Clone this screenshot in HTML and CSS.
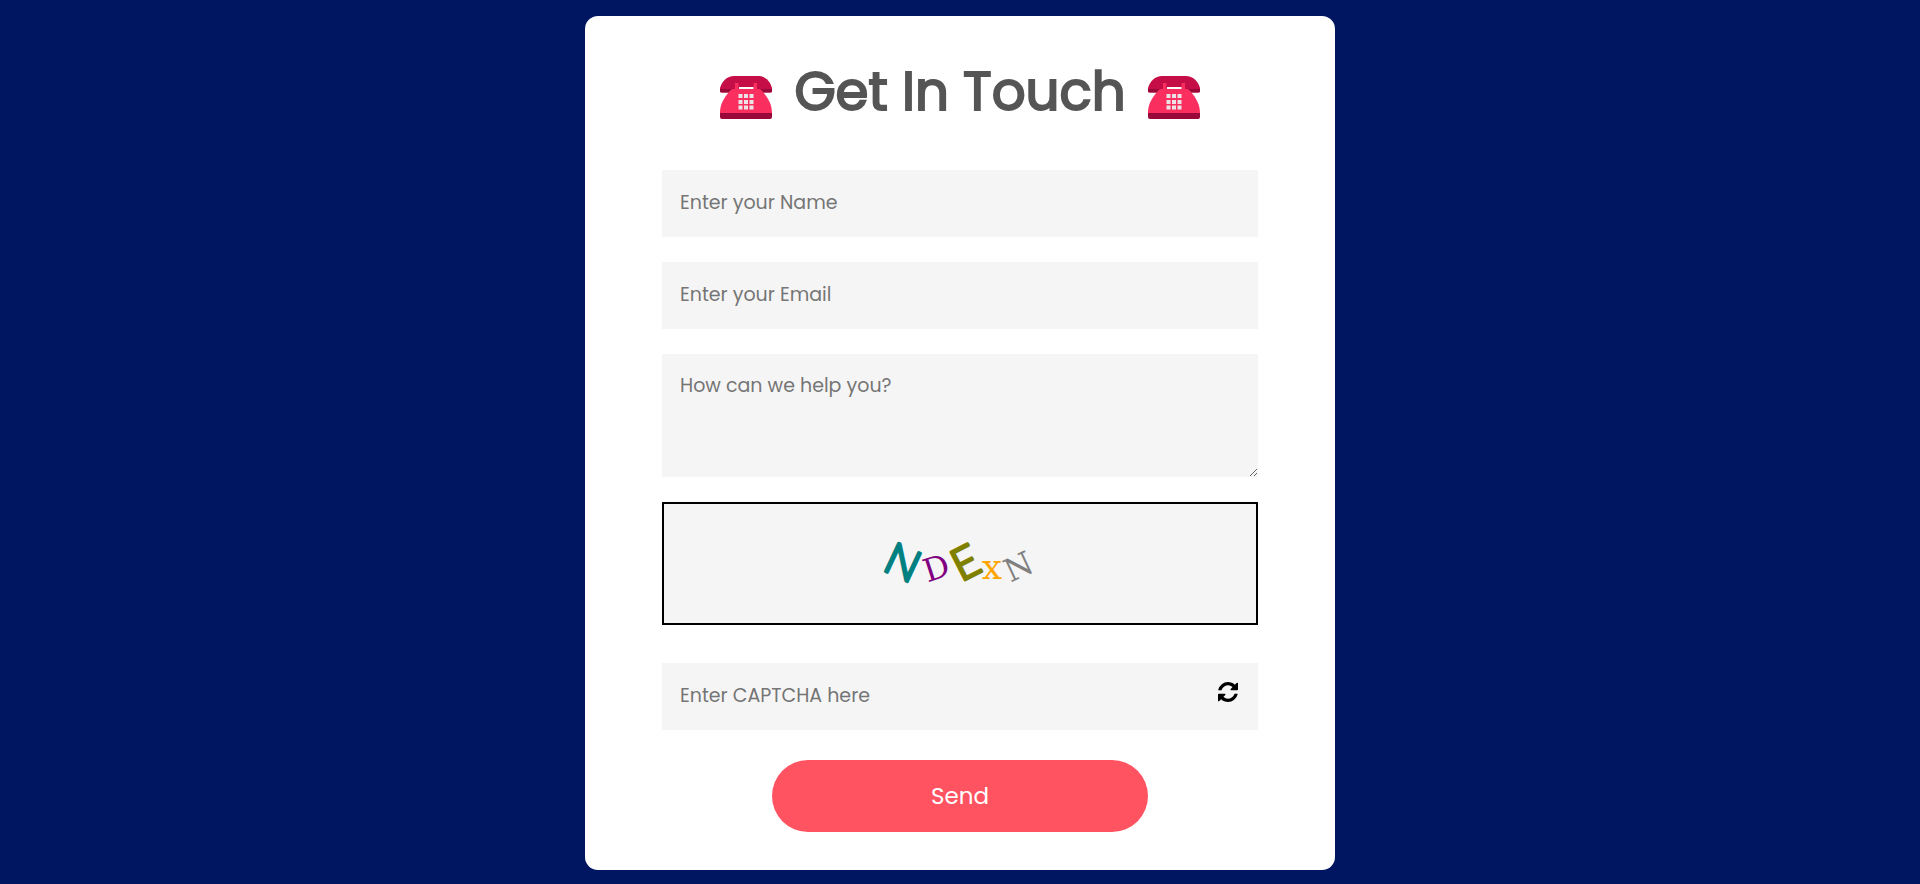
FILE: index.html
```html
<!DOCTYPE html>
<html lang="en">
<head>
<meta charset="utf-8">
<meta name="viewport" content="width=device-width, initial-scale=1">
<title>Get In Touch</title>
<link rel="stylesheet" href="styles.css">
</head>
<body>
<svg class="defs" aria-hidden="true">
  <symbol id="phone" viewBox="0 0 52 43">
    <path d="M0 12C2 5 7 0 14 0H38C45 0 50 5 52 12V15Q52 16.500 50 16.500H2Q0 16.500 0 15Z" fill="#c50d48"/>
    <path d="M0 13H52V15Q52 16.500 50 16.500H2Q0 16.500 0 15Z" fill="#990838"/>
    <path d="M15 7H18.500V13H33.500V7H37V13H39Q41 13 43 16C48 22 52 28 52 37V39H0V37C0 28 4 22 9 16Q11 13 13 13H15Z" fill="#fa2f60"/>
    <path d="M19 11H33.500V13H19Z" fill="#fff"/>
    <path d="M0 37H52V41Q52 43 50 43H2Q0 43 0 41Z" fill="#990838"/>
    <path d="M18.500 18h4v4h-4zM24 18h4v4h-4zM29.500 18h4v4h-4zM18.500 24h4v4h-4zM24 24h4v4h-4zM29.500 24h4v4h-4zM18.500 29.500h4v4h-4zM24 29.500h4v4h-4zM29.500 29.500h4v4h-4z" fill="#ebe3e5"/>
  </symbol>
</svg>
<main class="card">
  <h1 class="title">
    <svg class="phone" aria-hidden="true"><use href="#phone"/></svg>
    <span class="title-text">Get In Touch</span>
    <svg class="phone" aria-hidden="true"><use href="#phone"/></svg>
  </h1>
  <form class="form">
    <input class="field" type="text" placeholder="Enter your Name" aria-label="Name">
    <input class="field" type="email" placeholder="Enter your Email" aria-label="Email">
    <textarea class="field message" placeholder="How can we help you?" aria-label="Message"></textarea>
    <div class="captcha">
      <svg class="code" viewBox="0 0 160 60">
        <text class="bold-letter teal" transform="translate(23 28) rotate(25)" y="16">N</text>
        <text class="slab-letter purple" transform="translate(56 33) rotate(-18)" y="12">D</text>
        <text class="bold-letter olive" transform="translate(85 28) rotate(-27)" y="16">E</text>
        <text class="slab-letter orange" transform="translate(112 36)" y="9">x</text>
        <text class="slab-letter gray" transform="translate(138 32) rotate(-25)" y="12">N</text>
      </svg>
    </div>
    <div class="answer">
      <input class="field answer-input" type="text" placeholder="Enter CAPTCHA here" aria-label="CAPTCHA">
      <button class="refresh" type="button" aria-label="Refresh CAPTCHA">
        <svg class="refresh-icon" viewBox="0 128 1536 1536" aria-hidden="true"><path d="M1511 1056q0 5-1 7-64 268-268 434.500t-478 166.500q-146 0-282.500-55t-243.500-157l-129 129q-19 19-109 19v-512q0-64 64-64h448q26 0 45 19t19 45-19 45l-137 137q71 66 161 102t187 36q134 0 250-65t186-179q11-17 53-117 8-23 30-23h192q13 0 22.500 9.500t9.500 22.500zm25-864v512q0 64-64 64h-448q-26 0-45-19t-19-45 19-45l138-138q-148-137-349-137-134 0-250 65t-186 179q-11 17-53 117-8 23-30 23h-199q-13 0-22.500-9.500t-9.500-22.500v-7q65-268 270-434.500t480-166.500q146 0 284 55.500t245 156.500l130-129q19-19 109-19z"/></svg>
      </button>
    </div>
    <button class="send" type="submit">Send</button>
  </form>
</main>
</body>
</html>
```
FILE: styles.css
```css
* {
  box-sizing: border-box;
}

body {
  margin: 0;
  min-height: 100vh;
  padding: 16px 16px 14px;
  background: #001660;
  font-family: Poppins, Inter, sans-serif;
}

.defs {
  display: none;
}

.card {
  max-width: 750px;
  margin: 0 auto;
  padding: 38px 77px 38px;
  border-radius: 13px;
  background: #fff;
}

.title {
  display: flex;
  justify-content: center;
  align-items: center;
  gap: 22px;
  margin: 0 0 40px;
  color: #555;
  font-size: 53px;
  font-weight: 400;
  line-height: 76px;
}

.title-text {
  -webkit-text-stroke: 2px #555;
}

.phone {
  width: 52px;
  height: 43px;
  margin-top: 10px;
}

.form {
  display: flex;
  flex-direction: column;
  gap: 25px;
}

.field {
  display: block;
  width: 100%;
  height: 67px;
  padding: 0 18px 2px;
  border: 0;
  border-radius: 0;
  outline: 0;
  background: #f5f5f5;
  color: #222;
  font-family: inherit;
  font-size: 19px;
  line-height: 28px;
}

.field::placeholder {
  color: #757575;
  opacity: 1;
}

.message {
  height: 123px;
  padding: 18px;
  resize: vertical;
}

.captcha {
  display: flex;
  justify-content: center;
  align-items: center;
  height: 123px;
  border: 2px solid #000;
  background: #f5f5f5;
}

.code {
  width: 160px;
  height: 60px;
  overflow: visible;
  text-anchor: middle;
}

.bold-letter {
  font-family: Lato, sans-serif;
  font-size: 44px;
  font-weight: 300;
  stroke-width: 3px;
  stroke-linejoin: round;
}

.slab-letter {
  font-family: "DejaVu Serif", serif;
  font-size: 32px;
}

.teal {
  fill: #008080;
  stroke: #008080;
}

.purple {
  fill: #800080;
}

.olive {
  fill: #808000;
  stroke: #808000;
}

.orange {
  fill: #ffa500;
  font-size: 36px;
}

.gray {
  fill: #808080;
}

.answer {
  display: flex;
  margin-top: 13px;
  background: #f5f5f5;
}

.answer-input {
  flex: 1;
  min-width: 0;
}

.refresh {
  padding: 0 20px 10px;
  border: 0;
  background: none;
  cursor: pointer;
}

.refresh-icon {
  display: block;
  width: 20px;
  height: 20px;
}

.send {
  align-self: center;
  width: 63%;
  height: 72px;
  margin-top: 5px;
  border: 0;
  border-radius: 36px;
  background: #ff5361;
  color: #fff;
  font-family: inherit;
  font-size: 23px;
  cursor: pointer;
}
```
